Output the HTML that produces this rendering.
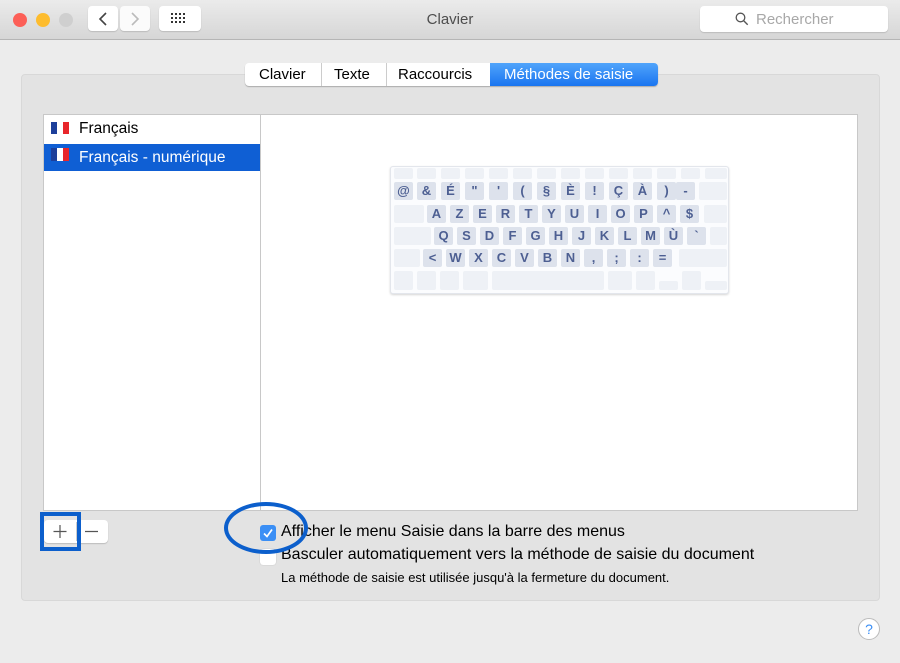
<!DOCTYPE html>
<html><head><meta charset="utf-8"><style>
*{margin:0;padding:0;box-sizing:border-box}
body{width:900px;height:663px;background:#ececec;font-family:"Liberation Sans",sans-serif;position:relative;overflow:hidden;color:#000}
.a{position:absolute}
.k{position:absolute;height:18px;background:#dde2ec;border-radius:2px;color:#4d5f92;font-weight:bold;font-size:13px;text-align:center;line-height:18px;width:19px}
.f{position:absolute;background:#eef1f6;border-radius:2px}
</style></head><body>
<div class="a" style="left:0;top:0;width:900px;height:40px;background:linear-gradient(#ebebeb,#d6d6d6);border-bottom:1px solid #b5b5b5"></div>
<div class="a" style="left:13px;top:13px;width:14px;height:14px;border-radius:50%;background:#fc5f57"></div>
<div class="a" style="left:36px;top:13px;width:14px;height:14px;border-radius:50%;background:#fdbc2e"></div>
<div class="a" style="left:59px;top:13px;width:14px;height:14px;border-radius:50%;background:#cfcfcf"></div>
<div class="a" style="left:88px;top:6px;width:30px;height:25px;background:#fff;border-radius:4px;box-shadow:0 1px 1px #bbb"></div>
<div class="a" style="left:120px;top:6px;width:30px;height:25px;background:#fbfbfb;border-radius:4px;box-shadow:0 1px 1px #bbb"></div>
<svg class="a" style="left:88px;top:6px" width="62" height="25"><path d="M18 7l-6 6 6 6" stroke="#444" stroke-width="1.6" fill="none"/><path d="M44 7l6 6-6 6" stroke="#bbb" stroke-width="1.6" fill="none"/></svg>
<div class="a" style="left:159px;top:6px;width:42px;height:25px;background:#fff;border-radius:4px;box-shadow:0 1px 1px #bbb"></div>
<svg class="a" style="left:171px;top:13px" width="18" height="11"><g fill="#333"><rect x="0" y="0" width="2" height="2"/><rect x="4" y="0" width="2" height="2"/><rect x="8" y="0" width="2" height="2"/><rect x="12" y="0" width="2" height="2"/><rect x="0" y="4" width="2" height="2"/><rect x="4" y="4" width="2" height="2"/><rect x="8" y="4" width="2" height="2"/><rect x="12" y="4" width="2" height="2"/><rect x="0" y="8" width="2" height="2"/><rect x="4" y="8" width="2" height="2"/><rect x="8" y="8" width="2" height="2"/><rect x="12" y="8" width="2" height="2"/></g></svg>
<div class="a" style="left:0;width:900px;top:11px;text-align:center;font-size:15px;color:#4d4d4d">Clavier</div>
<div class="a" style="left:700px;top:6px;width:188px;height:26px;background:#fff;border-radius:4px;box-shadow:0 1px 1px #bbb"></div>
<svg class="a" style="left:735px;top:12px" width="14" height="14"><circle cx="5.5" cy="5.5" r="4.3" stroke="#555" stroke-width="1.3" fill="none"/><path d="M8.7 8.7l4 4" stroke="#555" stroke-width="1.4"/></svg>
<div class="a" style="left:756px;top:11px;font-size:15px;color:#a8a8a8">Rechercher</div>

<div class="a" style="left:21px;top:74px;width:859px;height:527px;background:#e3e3e3;border:1px solid #d8d8d8;border-radius:4px"></div>
<div class="a" style="left:245px;top:63px;width:413px;height:23px;background:#fff;border-radius:4px;box-shadow:0 1px 1px #aaa;font-size:15px;line-height:23px">
<span class="a" style="left:14px">Clavier</span><span class="a" style="left:76px;top:0;width:1px;height:23px;background:#ccc"></span>
<span class="a" style="left:89px">Texte</span><span class="a" style="left:141px;top:0;width:1px;height:23px;background:#ccc"></span>
<span class="a" style="left:153px">Raccourcis</span>
<span class="a" style="left:245px;top:0;width:168px;height:23px;background:linear-gradient(#50a4fb,#1a75f0);border-radius:0 4px 4px 0;color:#fff;padding-left:14px">Méthodes de saisie</span></div>

<div class="a" style="left:43px;top:114px;width:815px;height:397px;background:#fff;border:1px solid #c8c8c8"></div>
<div class="a" style="left:260px;top:114px;width:1px;height:397px;background:#c8c8c8"></div>
<div class="a" style="left:51px;top:122px;width:18px;height:12px;background:linear-gradient(90deg,#1d3f9a 33%,#fff 33%,#fff 66%,#e8262b 66%)"></div>
<div class="a" style="left:79px;top:120px;font-size:15.5px">Français</div>
<div class="a" style="left:44px;top:144px;width:216px;height:27px;background:#0f5fd4"></div>
<div class="a" style="left:51px;top:148px;width:18px;height:13px;background:linear-gradient(90deg,#1d3f9a 33%,#fff 33%,#fff 66%,#e8262b 66%)"></div>
<div class="a" style="left:79px;top:149px;font-size:15.5px;color:#fff">Français - numérique</div>

<div class="a" style="left:390px;top:166px;width:339px;height:128px;background:#fbfcfe;border:1px solid #e3e6ec;border-radius:3px;box-shadow:0 1px 2px #d5d5d5"></div>
<div class="a" style="left:394px;top:168px">
<div class="f" style="left:0;top:0;width:19px;height:11px"></div><div class="f" style="left:23px;top:0;width:19px;height:11px"></div><div class="f" style="left:47px;top:0;width:19px;height:11px"></div><div class="f" style="left:71px;top:0;width:19px;height:11px"></div><div class="f" style="left:95px;top:0;width:19px;height:11px"></div><div class="f" style="left:119px;top:0;width:19px;height:11px"></div><div class="f" style="left:143px;top:0;width:19px;height:11px"></div><div class="f" style="left:167px;top:0;width:19px;height:11px"></div><div class="f" style="left:191px;top:0;width:19px;height:11px"></div><div class="f" style="left:215px;top:0;width:19px;height:11px"></div><div class="f" style="left:239px;top:0;width:19px;height:11px"></div><div class="f" style="left:263px;top:0;width:19px;height:11px"></div><div class="f" style="left:287px;top:0;width:19px;height:11px"></div><div class="f" style="left:311px;top:0;width:22px;height:11px"></div>
</div>
<div class="a" style="left:394px;top:182px">
<div class="k" style="left:0">@</div><div class="k" style="left:23px">&amp;</div><div class="k" style="left:47px">É</div><div class="k" style="left:71px">"</div><div class="k" style="left:95px">'</div><div class="k" style="left:119px">(</div><div class="k" style="left:143px">§</div><div class="k" style="left:167px">È</div><div class="k" style="left:191px">!</div><div class="k" style="left:215px">Ç</div><div class="k" style="left:239px">À</div><div class="k" style="left:263px">)</div><div class="k" style="left:282px">-</div><div class="f" style="left:305px;width:28px;height:18px"></div>
</div>
<div class="a" style="left:394px;top:205px">
<div class="f" style="left:0;width:30px;height:18px"></div>
<div class="k" style="left:33px">A</div><div class="k" style="left:56px">Z</div><div class="k" style="left:79px">E</div><div class="k" style="left:102px">R</div><div class="k" style="left:125px">T</div><div class="k" style="left:148px">Y</div><div class="k" style="left:171px">U</div><div class="k" style="left:194px">I</div><div class="k" style="left:217px">O</div><div class="k" style="left:240px">P</div><div class="k" style="left:263px">^</div><div class="k" style="left:286px">$</div><div class="f" style="left:310px;width:23px;height:18px"></div>
</div>
<div class="a" style="left:394px;top:227px">
<div class="f" style="left:0;width:37px;height:18px"></div>
<div class="k" style="left:40px">Q</div><div class="k" style="left:63px">S</div><div class="k" style="left:86px">D</div><div class="k" style="left:109px">F</div><div class="k" style="left:132px">G</div><div class="k" style="left:155px">H</div><div class="k" style="left:178px">J</div><div class="k" style="left:201px">K</div><div class="k" style="left:224px">L</div><div class="k" style="left:247px">M</div><div class="k" style="left:270px">Ù</div><div class="k" style="left:293px">`</div><div class="f" style="left:316px;width:17px;height:18px"></div>
</div>
<div class="a" style="left:394px;top:249px">
<div class="f" style="left:0;width:26px;height:18px"></div>
<div class="k" style="left:29px">&lt;</div><div class="k" style="left:52px">W</div><div class="k" style="left:75px">X</div><div class="k" style="left:98px">C</div><div class="k" style="left:121px">V</div><div class="k" style="left:144px">B</div><div class="k" style="left:167px">N</div><div class="k" style="left:190px">,</div><div class="k" style="left:213px">;</div><div class="k" style="left:236px">:</div><div class="k" style="left:259px">=</div><div class="f" style="left:285px;width:48px;height:18px"></div>
</div>
<div class="a" style="left:394px;top:271px">
<div class="f" style="left:0;width:19px;height:19px"></div><div class="f" style="left:23px;width:19px;height:19px"></div><div class="f" style="left:46px;width:19px;height:19px"></div><div class="f" style="left:69px;width:25px;height:19px"></div><div class="f" style="left:98px;width:112px;height:19px"></div><div class="f" style="left:214px;width:24px;height:19px"></div><div class="f" style="left:242px;width:19px;height:19px"></div><div class="f" style="left:265px;top:10px;width:19px;height:9px"></div><div class="f" style="left:288px;width:19px;height:19px"></div><div class="f" style="left:311px;top:10px;width:22px;height:9px"></div>
</div>

<div class="a" style="left:44px;top:520px;width:64px;height:23px;background:#fff;border-radius:4px;box-shadow:0 1px 1px #bbb"></div>
<div class="a" style="left:76px;top:522px;width:1px;height:19px;background:#ccc"></div>
<svg class="a" style="left:44px;top:520px" width="64" height="23"><path d="M16 5v13M9.5 11.5h13M41 11.5h13" stroke="#555" stroke-width="1.2"/></svg>
<div class="a" style="left:40px;top:512px;width:41px;height:39px;border:4px solid #0c5fcc"></div>

<div class="a" style="left:260px;top:525px;width:16px;height:16px;border-radius:3px;background:#3b8ff5"></div>
<svg class="a" style="left:260px;top:525px" width="16" height="16"><path d="M4 8.5l3 3 5-7" stroke="#fff" stroke-width="1.7" fill="none"/></svg>
<div class="a" style="left:281px;top:523px;font-size:16px">Afficher le menu Saisie dans la barre des menus</div>
<div class="a" style="left:260px;top:549px;width:16px;height:16px;border-radius:3px;background:#fff;box-shadow:0 0 1px #aaa"></div>
<div class="a" style="left:281px;top:546px;font-size:16px">Basculer automatiquement vers la méthode de saisie du document</div>
<div class="a" style="left:281px;top:570px;font-size:13px">La méthode de saisie est utilisée jusqu'à la fermeture du document.</div>
<div class="a" style="left:224px;top:502px;width:84px;height:52px;border:4px solid #0c5fcc;border-radius:50%"></div>

<div class="a" style="left:858px;top:618px;width:22px;height:22px;border-radius:50%;background:#fff;border:1px solid #bbb;text-align:center;line-height:20px;font-size:14px;color:#3b8ff5">?</div>
</body></html>
